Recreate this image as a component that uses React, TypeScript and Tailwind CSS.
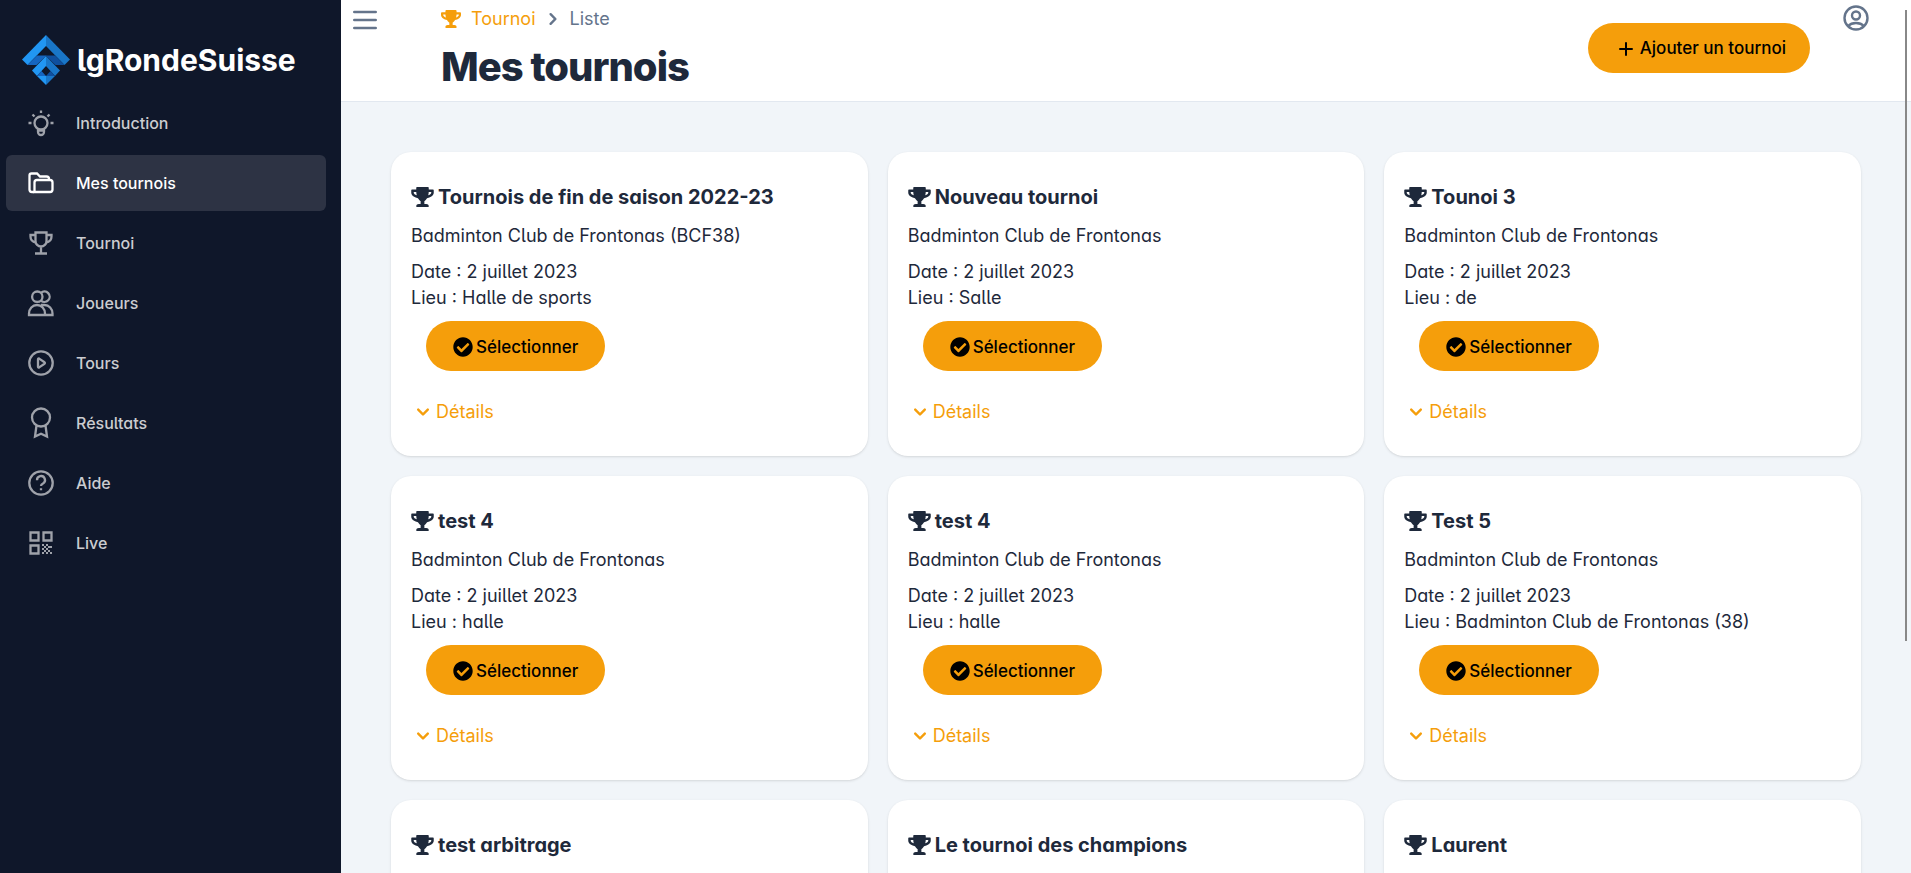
import React from 'react';
import { FaCheckCircle, FaTrophy } from 'react-icons/fa';
import { HiChevronDown, HiChevronRight, HiPlus, HiOutlineMenu } from 'react-icons/hi';

interface Tournament {
  name: string;
  club: string;
  place: string;
}

const tournaments: Tournament[] = [
  { name: 'Tournois de fin de saison 2022-23', club: 'Badminton Club de Frontonas (BCF38)', place: 'Halle de sports' },
  { name: 'Nouveau tournoi', club: 'Badminton Club de Frontonas', place: 'Salle' },
  { name: 'Tounoi 3', club: 'Badminton Club de Frontonas', place: 'de' },
  { name: 'test 4', club: 'Badminton Club de Frontonas', place: 'halle' },
  { name: 'test 4', club: 'Badminton Club de Frontonas', place: 'halle' },
  { name: 'Test 5', club: 'Badminton Club de Frontonas', place: 'Badminton Club de Frontonas (38)' },
  { name: 'test arbitrage', club: 'Badminton Club de Frontonas', place: 'halle' },
  { name: 'Le tournoi des champions', club: 'Badminton Club de Frontonas', place: 'halle' },
  { name: 'Laurent', club: 'Badminton Club de Frontonas', place: 'halle' },
];

// Outline icons of the side menu, drawn on a 32 x 32 grid
const icons = {
  bulb: (
    <>
      <circle cx="16" cy="16" r="6.5" />
      <path d="M13 22v3a3 3 0 0 0 6 0v-3M13 23.500h6M16 3.500v2.500M3.500 16h3M25.500 16h3M7.500 7.500l2 2M24.500 7.500l-2 2" />
    </>
  ),
  folders: (
    <>
      <path d="M9 25H7a2.500 2.500 0 0 1-2.500-2.500v-14A2 2 0 0 1 6.500 6.500h5.500l3 3h6.500a2.500 2.500 0 0 1 2.500 2.500v1" />
      <path d="M12 13h13a2.500 2.500 0 0 1 2.500 2.500v7A2.500 2.500 0 0 1 25 25H9.500V15.500A2.500 2.500 0 0 1 12 13z" />
    </>
  ),
  trophy: (
    <>
      <path d="M10.500 5.500h11v8.500c0 3-2.500 5.500-5.500 5.500s-5.500-2.500-5.500-5.500zM16 19.500v6.500M10 26.500h12" />
      <path d="M10.500 8H5.500v1.500c0 3.500 2 5.500 5.500 6M21.500 8h5v1.500c0 3.500-2 5.500-5.500 6" />
    </>
  ),
  users: (
    <>
      <circle cx="12.300" cy="9.700" r="5.200" />
      <path d="M16 5.800a5.200 5.200 0 1 1 0 7.800" />
      <path d="M4 28v-1.500c0-4.700 3.500-8.500 8-8.500s8 3.800 8 8.500V28zM16 18h3.500c4.500 0 8 3.800 8 8.500V28H20" />
    </>
  ),
  play: (
    <>
      <circle cx="16" cy="16" r="11.700" />
      <path d="M13 12.300v7.400a.8.800 0 0 0 1.200.7l5.300-3.700a.8.800 0 0 0 0-1.400l-5.300-3.700a.8.800 0 0 0-1.200.7z" />
    </>
  ),
  award: (
    <>
      <circle cx="16" cy="10.500" r="9" />
      <path d="M11.500 18.500L10 29.500l6-2.800 6 2.800-1.500-11" />
    </>
  ),
  help: (
    <>
      <circle cx="16" cy="16" r="11.700" />
      <path d="M12 13.200a4 4 0 1 1 6 3.300c-1.300.7-2 1.200-2 2.500M16 21.300v2" />
    </>
  ),
  qr: (
    <>
      <path d="M5.500 5.500h8v8h-8zM18.500 5.500h8v8h-8zM5.500 18.500h8v8h-8z" />
      <path
        d="M17 17h2v2h-2zM21 17h2v2h-2zM19 19h2v2h-2zM23 19h4v2h-4zM17 21h2v2h-2zM21 21h2v2h-2zM19 23h2v2h-2zM23 23h2v2h-2zM17 25h2v2h-2zM21 25h2v2h-2zM25 25h2v2h-2z"
        fill="currentColor"
        stroke="none"
      />
    </>
  ),
};

const menu: { label: string; icon: keyof typeof icons; active?: boolean }[] = [
  { label: 'Introduction', icon: 'bulb' },
  { label: 'Mes tournois', icon: 'folders', active: true },
  { label: 'Tournoi', icon: 'trophy' },
  { label: 'Joueurs', icon: 'users' },
  { label: 'Tours', icon: 'play' },
  { label: 'Résultats', icon: 'award' },
  { label: 'Aide', icon: 'help' },
  { label: 'Live', icon: 'qr' },
];

const Logo: React.FC = () => (
  <svg viewBox="0 0 48 50" className="h-[50px] w-12 shrink-0" aria-hidden="true">
    <path d="M24 0L0 24.500l5.500 5.500L24 11z" fill="#2196f3" />
    <path d="M24 0l24 24.500-5.500 5.500L24 11z" fill="#1976c8" />
    <path d="M15 20.500h9.500L14.500 30H5.500z" fill="#1565c0" />
    <path d="M23.500 20.500H33l9.500 9.500h-9z" fill="#0f4f9e" />
    <path d="M24 21L10 35.500l5 5.500L24 31z" fill="#2196f3" />
    <path d="M24 21l14 14.500-5 5.500L24 31z" fill="#1976c8" />
    <path d="M19.500 36l4.500 5h-9z" fill="#1565c0" />
    <path d="M28.500 36l4.500 5h-9z" fill="#0f4f9e" />
    <path d="M15 41h9v9z" fill="#2196f3" />
    <path d="M33 41h-9v9z" fill="#1976c8" />
  </svg>
);

const Sidebar: React.FC = () => (
  <aside className="w-[341px] shrink-0 bg-[#0f172a] px-1.5 pt-[35px]">
    <div className="flex h-[50px] items-center gap-[7px] pl-4 text-white">
      <Logo />
      <span className="text-3xl font-bold">lgRondeSuisse</span>
    </div>
    <nav className="mt-[10px] flex flex-col gap-1 pr-[9px]">
      {menu.map(item => (
        <a
          key={item.label}
          href="#"
          className={`flex h-14 items-center gap-[19px] rounded-md pl-[19px] text-base font-medium ${
            item.active ? 'bg-[#2d3344] text-white' : 'text-[#cbccd0]'
          }`}
        >
          <svg
            viewBox="0 0 32 32"
            className={`size-8 ${item.active ? 'text-white' : 'text-[#9fa2aa]'}`}
            fill="none"
            stroke="currentColor"
            strokeWidth="2.300"
            aria-hidden="true"
          >
            {icons[item.icon]}
          </svg>
          {item.label}
        </a>
      ))}
    </nav>
  </aside>
);

const Header: React.FC = () => (
  <header className="flex h-[102px] shrink-0 items-start border-b border-[#e2e8f0] bg-white pr-[41px]">
    <button type="button" aria-label="Menu" className="ml-2 mt-1 text-[#64748b]">
      <HiOutlineMenu className="size-8" />
    </button>
    <div className="ml-[60px] flex-1">
      <nav className="flex h-[37px] items-center text-lg">
        <a href="#" className="flex items-center gap-[10px] text-[#f59e0b]">
          <FaTrophy className="size-5" />
          Tournoi
        </a>
        <HiChevronRight className="mx-[5px] size-6 text-[#64748b]" />
        <span className="text-[#64748b]">Liste</span>
      </nav>
      <h1 className="text-[40px] font-extrabold leading-[60px] tracking-tight">Mes tournois</h1>
    </div>
    <button
      type="button"
      className="mt-[23px] flex h-[50px] items-center gap-1 rounded-full bg-[#f59e0b] pl-7 pr-6 pt-0.5 text-[17px] font-medium text-black [font-feature-settings:normal]"
    >
      <HiPlus className="size-5" />
      Ajouter un tournoi
    </button>
    <button type="button" aria-label="Compte" className="ml-8 mt-1 text-[#64748b]">
      <svg viewBox="0 0 28 28" className="size-7" fill="none" stroke="currentColor" strokeWidth="2.400">
        <circle cx="14" cy="14" r="11.500" />
        <circle cx="14" cy="11.500" r="4" />
        <path d="M6 22c2-2 5-3 8-3s6 1 8 3" />
      </svg>
    </button>
  </header>
);

const TournamentCard: React.FC<{ tournament: Tournament }> = ({ tournament }) => (
  <article className="h-[304px] rounded-[20px] bg-white px-5 pt-7 shadow">
    <h2 className="flex h-[34px] items-center gap-1 text-xl font-bold">
      <FaTrophy className="h-5 w-[23px]" />
      {tournament.name}
    </h2>
    <p className="mt-[9px] leading-[26px]">{tournament.club}</p>
    <p className="mt-[10px] leading-[26px]">Date : 2 juillet 2023</p>
    <p className="leading-[26px]">Lieu : {tournament.place}</p>
    <button
      type="button"
      className="ml-[15px] mt-[10px] flex h-[50px] items-center gap-[3px] rounded-full bg-[#f59e0b] pl-[27px] pr-[27px] pt-0.5 text-[17px] font-medium text-black [font-feature-settings:normal]"
    >
      <FaCheckCircle className="size-5" />
      Sélectionner
    </button>
    <button
      type="button"
      className="mt-7 flex items-center gap-px leading-[26px] text-[#f59e0b] [font-feature-settings:normal]"
    >
      <HiChevronDown className="size-6" />
      Détails
    </button>
  </article>
);

const App: React.FC = () => (
  <div className="relative flex h-screen overflow-hidden font-['Inter',sans-serif] text-[#1e293b] [font-feature-settings:'cv05','cv11']">
    <Sidebar />
    <div className="flex min-w-0 flex-1 flex-col">
      <Header />
      <main className="grid min-h-0 flex-1 grid-cols-3 content-start gap-5 overflow-y-auto bg-[#f1f5f9] px-[50px] py-[50px] text-lg [scrollbar-width:none]">
        {tournaments.map((tournament, i) => (
          <TournamentCard key={i} tournament={tournament} />
        ))}
      </main>
    </div>
    <div className="absolute right-1 top-[10px] h-[631px] w-0.5 bg-[#888888]" />
  </div>
);

export default App;
